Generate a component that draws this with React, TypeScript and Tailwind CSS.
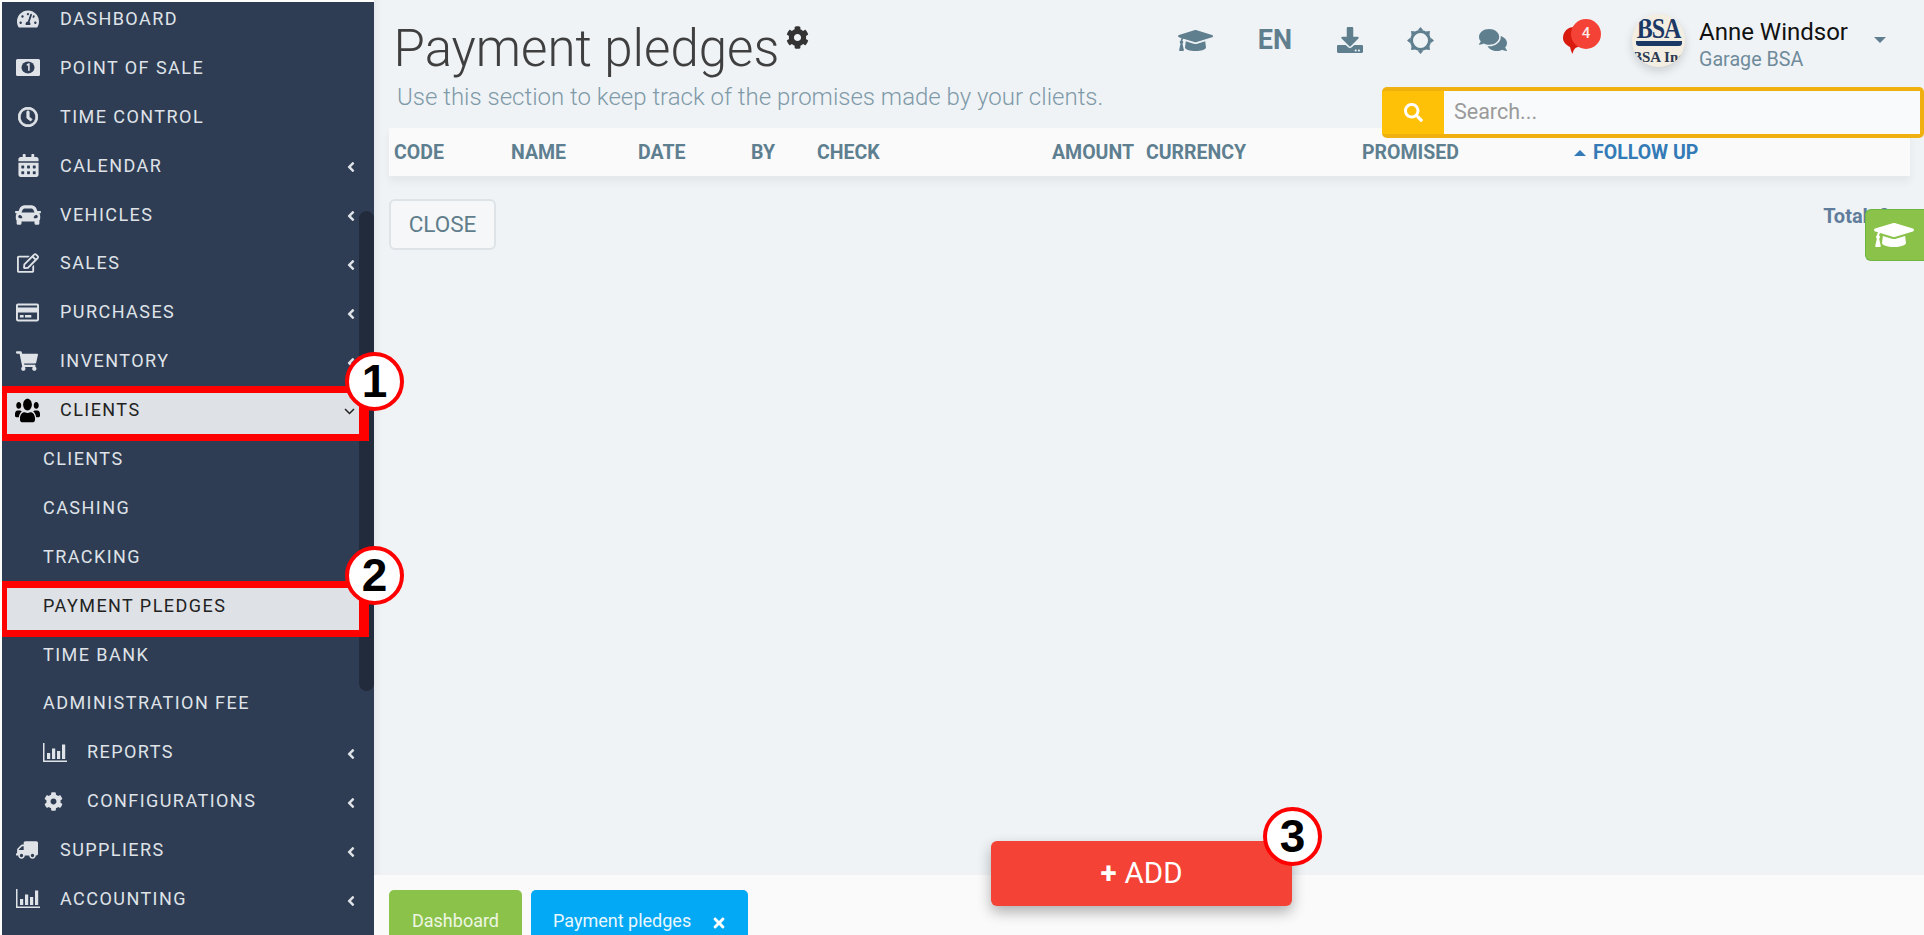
import React from 'react';
import {
  FaAngleLeft,
  FaCalendarAlt,
  FaCar,
  FaCog,
  FaComments,
  FaDownload,
  FaGraduationCap,
  FaRegClock,
  FaRegCreditCard,
  FaRegEdit,
  FaSearch,
  FaShoppingCart,
  FaTachometerAlt,
  FaTimes,
  FaTruck,
  FaUsers,
} from 'react-icons/fa';

type IconProps = { className?: string };

const MoneyIcon = ({ className }: IconProps) => (
  <svg className={className} width="24" height="17" viewBox="0 0 24 17" fill="currentColor">
    <path d="M0 1.5A1.5 1.5 0 0 1 1.500 0h21A1.500 1.500 0 0 1 24 1.500v14a1.500 1.500 0 0 1-1.500 1.500h-21A1.500 1.500 0 0 1 0 15.500z" />
    <ellipse cx="12" cy="8.500" rx="6.500" ry="6" fill="#2f3d54" />
    <path d="M10.500 5.500l2-1.200h1.200v7.400h-1.600V6.300l-1.100.6z" />
  </svg>
);

const ChartIcon = ({ className }: IconProps) => (
  <svg className={className} width="24" height="19" viewBox="0 0 24 19" fill="currentColor">
    <path d="M0 0h1.500v17.500H24V19H0z" />
    <path d="M4 10h3.200v6H4zM9 5.500h3.200V16H9zM14 8h3.200v8H14zM19 1.500h3.200V16H19z" />
  </svg>
);

const ThinAngleDown = ({ className }: IconProps) => (
  <svg className={className} width="11" height="7" viewBox="0 0 11 7" fill="none" stroke="currentColor" strokeWidth="1.500">
    <path d="M1 1l4.500 4.500L10 1" />
  </svg>
);

type MenuItem = {
  label: string;
  icon?: React.ReactNode;
  chevron?: boolean;
  sub?: boolean;
  open?: boolean;
  active?: boolean;
};

const menu: MenuItem[] = [
  { label: 'DASHBOARD', icon: <FaTachometerAlt className="ml-[1px] text-[22px]" /> },
  { label: 'POINT OF SALE', icon: <MoneyIcon /> },
  { label: 'TIME CONTROL', icon: <FaRegClock className="ml-[2px] text-[20px]" stroke="currentColor" strokeWidth={24} /> },
  { label: 'CALENDAR', icon: <FaCalendarAlt className="ml-[1px] text-[23px]" />, chevron: true },
  { label: 'VEHICLES', icon: <FaCar className="-ml-[1px] text-[26px]" />, chevron: true },
  { label: 'SALES', icon: <FaRegEdit className="ml-[1px] text-[22px]" />, chevron: true },
  { label: 'PURCHASES', icon: <FaRegCreditCard className="text-[23px]" />, chevron: true },
  { label: 'INVENTORY', icon: <FaShoppingCart className="text-[22px]" />, chevron: true },
  { label: 'CLIENTS', icon: <FaUsers className="-ml-[1px] scale-y-[1.35] text-[25px] text-black" />, open: true, active: true },
  { label: 'CLIENTS', sub: true },
  { label: 'CASHING', sub: true },
  { label: 'TRACKING', sub: true },
  { label: 'PAYMENT PLEDGES', sub: true, active: true },
  { label: 'TIME BANK', sub: true },
  { label: 'ADMINISTRATION FEE', sub: true },
  { label: 'REPORTS', icon: <ChartIcon />, sub: true, chevron: true },
  { label: 'CONFIGURATIONS', icon: <FaCog className="ml-[1px] text-[19px]" />, sub: true, chevron: true },
  { label: 'SUPPLIERS', icon: <FaTruck className="scale-x-[-1] text-[22px]" />, chevron: true },
  { label: 'ACCOUNTING', icon: <ChartIcon />, chevron: true },
];

const columns = ['CODE', 'NAME', 'DATE', 'BY', 'CHECK'];

const SidebarRow = ({ item }: { item: MenuItem }) => (
  <div
    className={`relative flex h-[48.9px] shrink-0 items-center tracking-[1.45px] ${
      item.active ? 'w-[357px] text-[#222]' : 'w-[372px] text-[#dfe3e8]'
    } ${item.sub ? 'pl-[41px]' : 'pl-[14px]'}`}
  >
    {item.active && <div className="absolute inset-0 -left-[2px] bg-[#dee1e5]" />}
    {item.icon && <span className="relative flex w-[44px] items-center">{item.icon}</span>}
    <span className="relative text-[18px] leading-none font-normal">{item.label}</span>
    {item.chevron && <FaAngleLeft className="absolute left-[341px] top-[18px] text-[16px]" />}
    {item.open && <ThinAngleDown className="absolute left-[342px] top-[22px]" />}
    {item.active && (
      <div className="absolute top-0 -right-[10px] -bottom-[6.500px] -left-[2px] z-20 border-[7px] border-r-[10px] border-[#ff0000]" />
    )}
  </div>
);

const Callout = ({ n, className }: { n: number; className: string }) => (
  <div
    className={`absolute z-30 flex h-[59px] w-[59px] items-center justify-center rounded-full border-[4px] border-[#ff0000] bg-white font-['Liberation_Sans',sans-serif] text-[46px] font-bold text-black ${className}`}
  >
    {n}
  </div>
);

const SunIcon = () => (
  <svg width="27" height="27" viewBox="0 0 27 27" fill="#5f7f8f">
    <circle cx="13.500" cy="13.500" r="9" fill="none" stroke="#5f7f8f" strokeWidth="3" />
    <path d="M13.500 0l3 3.600h-6zM13.500 27l-3-3.600h6zM0 13.500l3.600-3v6zM27 13.500l-3.600 3v-6zM4 4l4.600.6-4 4zM23 23l-4.600-.6 4-4zM23 4l-.6 4.600-4-4zM4 23l.6-4.600 4 4z" />
  </svg>
);

const ChatBubble = () => (
  <svg width="26" height="27" viewBox="0 0 26 27">
    <path d="M11 0c6 0 11 4.500 11 11 0 5-3 8-7 9-2 .5-4 1-5.500 7-1.500-3-2-5-2.500-7C3 18 0 15 0 11 0 4.500 5 0 11 0z" fill="#d81a0f" />
  </svg>
);

const Avatar = () => (
  <div className="flex h-[53px] w-[53px] flex-col items-center overflow-hidden rounded-full bg-[#f3eee1] font-['Liberation_Serif',serif] shadow-[0_4px_10px_rgba(0,0,0,0.15)]">
    <span className="mt-[2px] scale-y-[1.25] text-[24px] leading-[24px] font-bold tracking-[-1px] whitespace-nowrap text-[#1c3966]">BSA</span>
    <div className="mt-[1px] h-[5px] w-[46px] shrink-0 rounded-b-[3px] bg-[#1c3966]" />
    <span className="mt-[4px] text-[15px] leading-[15px] font-bold whitespace-nowrap text-[#2b3a52]">BSA Inc</span>
  </div>
);

const App = () => {
  return (
    <div className="flex h-[935px] w-[1924px] overflow-hidden bg-white pt-[2px] pl-[2px] font-['Roboto',sans-serif]">
      <aside className="relative w-[372px] shrink-0 overflow-hidden bg-[#2f3d54]">
        <div className="-mt-[7.500px] flex flex-col">
          {menu.map((item, i) => (
            <SidebarRow key={i} item={item} />
          ))}
        </div>
        <div className="absolute top-[209px] left-[357px] z-10 h-[480px] w-[15px] rounded-[8px] bg-[#222b3b]" />
      </aside>

      <main className="relative -mt-[2px] flex min-w-0 flex-1 flex-col bg-[#eff3f6] shadow-[inset_12px_0_10px_-10px_rgba(0,0,0,0.06)]">
        <div className="flex h-[128px] shrink-0">
          <div className="pl-[23px]">
            <div className="mt-[18px] flex items-start">
              <h1 className="-ml-[3.500px] text-[51px] leading-[62px] font-light text-[#3f3f3f]">Payment pledges</h1>
              <FaCog className="mt-[8px] ml-[7px] text-[23px] text-[#333]" />
            </div>
            <p className="mt-[3px] text-[24px] leading-[28px] font-light text-[#7f9aa8]">
              Use this section to keep track of the promises made by your clients.
            </p>
          </div>
          <div className="ml-auto flex h-[80px] items-center pr-[38px] text-[#5f7f8f]">
            <FaGraduationCap className="mr-[45px] text-[35px]" />
            <span className="mr-[45px] text-[27px] font-bold">EN</span>
            <FaDownload className="mr-[44px] text-[26px]" />
            <span className="mr-[45px]">
              <SunIcon />
            </span>
            <FaComments className="mr-[56px] text-[28px]" />
            <div className="relative mr-[44px] h-[27px] w-[25px]">
              <ChatBubble />
              <span className="absolute -top-[8px] left-[8px] flex h-[30px] w-[30px] items-center justify-center rounded-full bg-[#f44336] text-[15px] font-medium text-[#fde8e6]">
                4
              </span>
            </div>
            <Avatar />
            <div className="mt-[11px] ml-[14px] w-[175px]">
              <div className="text-[24px] leading-[27px] text-[#111]">Anne Windsor</div>
              <div className="text-[19.700px] leading-[27px] text-[#6f8b9b]">Garage BSA</div>
            </div>
            <div className="h-0 w-0 border-x-[6px] border-t-[6px] border-x-transparent border-t-[#5f7f8f]" />
          </div>
        </div>

        <div className="mr-[14px] ml-[15px] grid h-[48px] shrink-0 grid-cols-[117px_127px_113px_66px_235px_94px_216px_212px_1fr] items-center bg-[#fafafa] pt-[2px] pl-[5px] text-[19.500px] font-bold text-[#5e7f90] shadow-[0_6px_8px_rgba(0,0,0,0.05)]">
          {columns.map((c) => (
            <span key={c}>{c}</span>
          ))}
          <span>AMOUNT</span>
          <span>CURRENCY</span>
          <span>PROMISED</span>
          <span className="flex items-center text-[#337ab7]">
            <span className="mr-[7px] h-0 w-0 border-x-[6px] border-b-[6px] border-x-transparent border-b-[#337ab7]" />
            FOLLOW UP
          </span>
        </div>

        <div className="flex items-start justify-between pt-[23px] pl-[15px]">
          <button className="h-[51px] w-[107px] rounded-[6px] border-[2px] border-[#dde3e6] bg-[#f5f7f9] text-[22.500px] text-[#607d8b]">
            CLOSE
          </button>
          <span className="mt-[2px] mr-[34px] text-[20px] font-bold text-[#5f7d9b]">Total: 0</span>
        </div>

        <footer className="mt-auto flex h-[60px] items-end bg-[#fafafa] pl-[15px]">
          <div className="flex h-[45px] w-[133px] items-start justify-center rounded-t-[5px] bg-[#8bc34a] pt-[21px] text-[18px] leading-[20px] text-[#eef6e4]">
            Dashboard
          </div>
          <div className="ml-[9px] flex h-[45px] w-[217px] items-start rounded-t-[5px] bg-[#03a9f4] pt-[21px] pl-[22px] text-[18px] leading-[20px] text-[#eaf7fe]">
            Payment pledges
            <FaTimes className="mt-[4px] ml-[20px] text-[16px] text-white" />
          </div>
        </footer>

        <div className="absolute top-[87px] left-[1008px] z-20 flex h-[51px] w-[542px] rounded-[5px] border-[4px] border-l-0 border-[#f0b00f] bg-[#ffc107]">
          <div className="flex w-[62px] shrink-0 items-center justify-center">
            <FaSearch className="text-[19px] text-white" />
          </div>
          <div className="flex flex-1 items-center bg-[#f9fafc] pl-[10px] text-[21.500px] text-[#9a9a9a]">Search...</div>
        </div>

        <div className="absolute top-[209px] right-0 z-20 flex h-[52px] w-[59px] items-center justify-center rounded-l-[6px] border-[1px] border-r-0 border-[#6fb544] bg-[#8bc34a]">
          <FaGraduationCap className="-ml-[3px] text-[40px] text-white" />
        </div>

        <button className="absolute top-[841px] left-[617px] z-20 flex h-[65px] w-[301px] items-center justify-center rounded-[6px] bg-[#f44336] text-[29.500px] text-white shadow-[0_6px_14px_rgba(0,0,0,0.3)]">
          <span className="mr-[8px] font-bold">+</span>ADD
        </button>

        <Callout n={3} className="top-[807px] left-[889px]" />
      </main>

      <Callout n={1} className="top-[352px] left-[345px]" />
      <Callout n={2} className="top-[546px] left-[345px]" />
    </div>
  );
};

export default App;
